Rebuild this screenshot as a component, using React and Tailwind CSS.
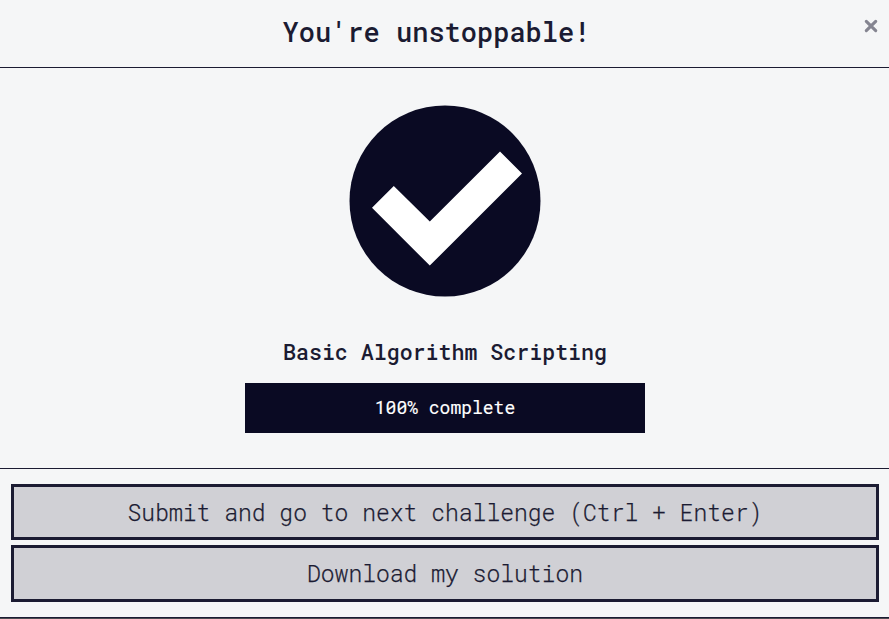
function Header() {
  return (
    <header className="flex h-[68px] shrink-0 items-start border-b border-[#1b1b32]">
      <div className="w-[18px]" />
      <h1 className="mt-[13px] flex-1 whitespace-pre pl-[2px] text-center text-[27px] leading-[38px] font-medium">
        You're unstoppable!
      </h1>
      <button aria-label="Close" className="mt-[14px] flex h-6 w-9 items-center justify-center">
        <svg width="14" height="14" viewBox="0 0 14 14" className="stroke-[#858591]">
          <path d="M2.3 2.3 11.7 11.7M11.7 2.3 2.3 11.7" strokeWidth="3.1" strokeLinecap="round" />
        </svg>
      </button>
    </header>
  );
}

function Completion() {
  return (
    <main className="flex h-[401px] shrink-0 flex-col items-center border-b border-[#1b1b32] pt-[37px]">
      <svg width="193" height="193" viewBox="349 105 193 193" className="ml-px shrink-0">
        <circle cx="445" cy="201" r="95.5" fill="#0a0a23" />
        <path d="M372 207.8 393.8 186 429.8 221.6 500 151.4 522 173.4 429.8 265.6Z" fill="#fff" />
      </svg>
      <h2 className="mt-[38px] whitespace-pre pl-px text-[21.6px] leading-8 font-medium">
        Basic Algorithm Scripting
      </h2>
      <div className="mt-[15px] flex h-[50px] w-[400px] items-center justify-center bg-[#0a0a23] pb-px pl-px text-[18px] text-white [-webkit-text-stroke:0.15px_#fff]">
        100% complete
      </div>
    </main>
  );
}

function Footer() {
  return (
    <footer className="flex h-[149px] shrink-0 flex-col gap-[5px] border-b border-[#1b1b32] pt-[15px] pr-[10px] pl-[11px] text-[23px] font-light [-webkit-text-stroke:0.25px_#1b1b32]">
      <button className="flex h-14 items-center justify-center border-[3px] border-[#1b1b32] bg-[#d0d0d5]">
        Submit and go to next challenge (Ctrl + Enter)
      </button>
      <button className="flex h-[57px] items-center justify-center border-[3px] border-[#1b1b32] bg-[#d0d0d5]">
        Download my solution
      </button>
    </footer>
  );
}

export default function App() {
  return (
    <div className="flex h-[619px] w-[889px] flex-col overflow-hidden bg-[#4b4c51] font-['Roboto_Mono','DejaVu_Sans_Mono',monospace] text-[#1b1b32]">
      <div className="flex h-[618px] shrink-0 flex-col bg-[#f5f6f7]">
        <Header />
        <Completion />
        <Footer />
      </div>
    </div>
  );
}
